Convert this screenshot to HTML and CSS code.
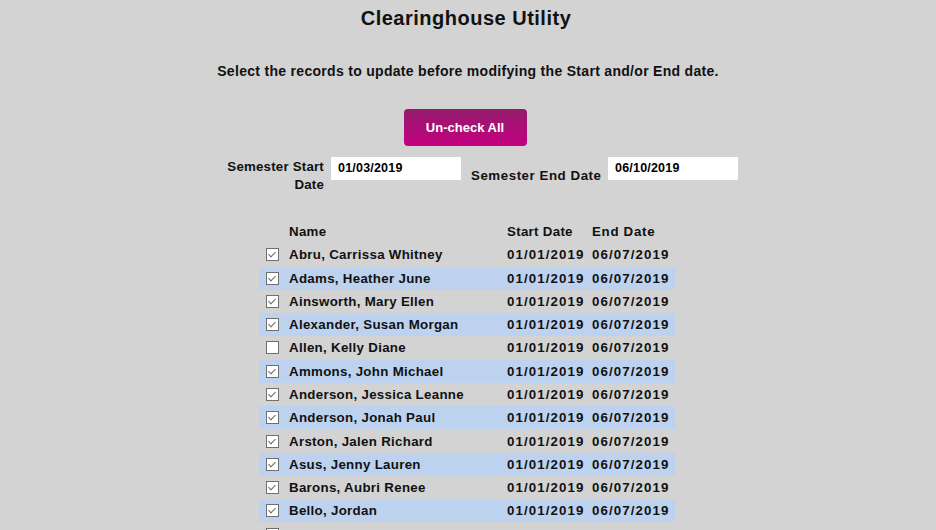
FILE: index.html
```html
<!DOCTYPE html>
<html>
<head>
<meta charset="utf-8">
<link rel="stylesheet" href="styles.css">
</head>
<body>
<div class="page">
  <h1 class="title">Clearinghouse Utility</h1>
  <p class="caption">Select the records to update before modifying the Start and/or End date.</p>
  <div class="btn-row"><button class="btn">Un-check All</button></div>
  <div class="dates">
    <label class="lbl lbl-start">Semester Start Date</label>
    <div class="field">01/03/2019</div>
    <label class="lbl lbl-end">Semester End Date</label>
    <div class="field">06/10/2019</div>
  </div>
  <table class="grid">
    <colgroup><col class="c-chk"><col class="c-name"><col class="c-start"><col class="c-end"></colgroup>
    <thead>
      <tr><th></th><th>Name</th><th>Start Date</th><th>End Date</th></tr>
    </thead>
    <tbody>
      <tr><td><span class="cb on"></span></td><td>Abru, Carrissa Whitney</td><td class="d">01/01/2019</td><td class="d">06/07/2019</td></tr>
      <tr class="alt"><td><span class="cb on"></span></td><td>Adams, Heather June</td><td class="d">01/01/2019</td><td class="d">06/07/2019</td></tr>
      <tr><td><span class="cb on"></span></td><td>Ainsworth, Mary Ellen</td><td class="d">01/01/2019</td><td class="d">06/07/2019</td></tr>
      <tr class="alt"><td><span class="cb on"></span></td><td>Alexander, Susan Morgan</td><td class="d">01/01/2019</td><td class="d">06/07/2019</td></tr>
      <tr><td><span class="cb"></span></td><td>Allen, Kelly Diane</td><td class="d">01/01/2019</td><td class="d">06/07/2019</td></tr>
      <tr class="alt"><td><span class="cb on"></span></td><td>Ammons, John Michael</td><td class="d">01/01/2019</td><td class="d">06/07/2019</td></tr>
      <tr><td><span class="cb on"></span></td><td>Anderson, Jessica Leanne</td><td class="d">01/01/2019</td><td class="d">06/07/2019</td></tr>
      <tr class="alt"><td><span class="cb on"></span></td><td>Anderson, Jonah Paul</td><td class="d">01/01/2019</td><td class="d">06/07/2019</td></tr>
      <tr><td><span class="cb on"></span></td><td>Arston, Jalen Richard</td><td class="d">01/01/2019</td><td class="d">06/07/2019</td></tr>
      <tr class="alt"><td><span class="cb on"></span></td><td>Asus, Jenny Lauren</td><td class="d">01/01/2019</td><td class="d">06/07/2019</td></tr>
      <tr><td><span class="cb on"></span></td><td>Barons, Aubri Renee</td><td class="d">01/01/2019</td><td class="d">06/07/2019</td></tr>
      <tr class="alt"><td><span class="cb on"></span></td><td>Bello, Jordan</td><td class="d">01/01/2019</td><td class="d">06/07/2019</td></tr>
      <tr><td><span class="cb on"></span></td><td>Bellamy, Wanda Marie</td><td class="d">01/01/2019</td><td class="d">06/07/2019</td></tr>
    </tbody>
  </table>
</div>
</body>
</html>
```
FILE: styles.css
```css
html, body {
  margin: 0;
  padding: 0;
  background: #d3d3d3;
  height: 100%;
  overflow: hidden;
}
.page {
  font-family: "Liberation Sans", Arial, sans-serif;
  font-weight: bold;
  color: #111;
  text-align: center;
  padding-top: 6px;
}
.title {
  margin: 0 0 0 -4px;
  font-size: 20px;
  line-height: 24px;
  letter-spacing: 0.5px;
}
.caption {
  margin: 0;
  padding-top: 32px;
  font-size: 14px;
  line-height: 18px;
  letter-spacing: 0.3px;
}
.btn-row {
  padding-top: 29px;
  display: flex;
  justify-content: center;
}
.btn {
  width: 123px;
  height: 37px;
  border: none;
  border-radius: 4px;
  background: linear-gradient(#931c6c, #c4007f);
  color: #fff;
  font-family: "Liberation Sans", Arial, sans-serif;
  font-weight: bold;
  font-size: 13px;
  margin-left: -6px;
}
.dates {
  display: flex;
  align-items: center;
  margin-top: 11px;
  margin-left: 227px;
  width: 511px;
  font-size: 13.3px;
  line-height: 18px;
  letter-spacing: 0.2px;
}
.lbl {
  text-align: right;
}
.lbl-start {
  width: 97px;
  margin-right: 7px;
  padding-top: 1px;
}
.lbl-end {
  margin-left: 10px;
  margin-right: 7px;
  width: 130px;
  white-space: nowrap;
  letter-spacing: 0.55px;
}
.field {
  align-self: flex-start;
  width: 123px;
  height: 23px;
  padding-left: 7px;
  background: #fff;
  text-align: left;
  font-size: 12.5px;
  line-height: 22px;
  letter-spacing: 0.2px;
  color: #000;
}
.grid {
  margin: 26px auto 0;
  border-collapse: collapse;
  table-layout: fixed;
  width: 416px;
  font-size: 13.3px;
  letter-spacing: 0.3px;
  position: relative;
  left: -1px;
}
.c-chk { width: 30px; }
.c-name { width: 218px; }
.c-start { width: 85px; }
.c-end { width: 83px; }
.grid th, .grid td {
  padding: 0;
  text-align: left;
  white-space: nowrap;
  overflow: hidden;
  height: 23.27px;
  line-height: 23px;
  font-weight: bold;
}
.grid th:last-child {
  letter-spacing: 0.7px;
}
.grid td.d {
  letter-spacing: 1.1px;
}
.grid td:first-child {
  padding-left: 7px;
}
.grid tr.alt td {
  background: #bdd2ee;
}
.cb {
  display: inline-block;
  width: 11px;
  height: 11px;
  border: 1px solid #6f6f6f;
  background: #fff;
  vertical-align: middle;
  position: relative;
  top: -1px;
}
.cb.on::after {
  content: "";
  position: absolute;
  left: 3px;
  top: 1px;
  width: 3px;
  height: 6px;
  border-right: 1.3px solid #6a6a6a;
  border-bottom: 1.3px solid #6a6a6a;
  transform: rotate(45deg);
}
```
